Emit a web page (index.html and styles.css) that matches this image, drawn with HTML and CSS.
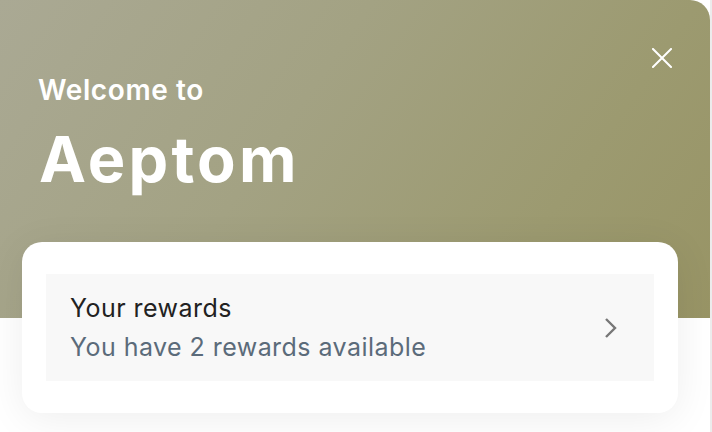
FILE: index.html
```html
<!DOCTYPE html>
<html>
<head>
<meta charset="utf-8">
<link rel="stylesheet" href="styles.css">
</head>
<body>
<div class="m-page">
    <div class="m-hero">
        <div class="m-hero__text">
            <div class="m-hero__sub">Welcome to</div>
            <div class="m-hero__title">Aeptom</div>
        </div>
        <a class="m-hero__close" href="#" aria-label="Close">
            <svg width="20" height="20" viewBox="0 0 20 20"><path d="M1 1L19 19M19 1L1 19" stroke="#fff" stroke-width="2" stroke-linecap="square"/></svg>
        </a>
    </div>
    <div class="m-card">
        <a class="m-rewards" href="#">
            <div class="m-rewards__text">
                <div class="m-rewards__title">Your rewards</div>
                <div class="m-rewards__desc">You have 2 rewards available</div>
            </div>
            <svg class="m-rewards__arrow" width="16" height="22" viewBox="0 0 16 22"><path d="M3 2L12 11L3 20" fill="none" stroke="#777" stroke-width="2.4"/></svg>
        </a>
    </div>
</div>
</body>
</html>
```

FILE: styles.css
```css
html, body {margin: 0; padding: 0;}
body {font-family: Inter, "Noto Sans", sans-serif; background: #fff; width: 712px; height: 432px; overflow: hidden;}
.m-page {width: 710px; height: 432px; border-right: 2px solid #ececec;}
.m-hero {display: flex; justify-content: space-between; align-items: flex-start; height: 318px; box-sizing: border-box; padding: 48px 38px 0 38px; border-top-right-radius: 20px; background: linear-gradient(125deg, #aaa994 0%, #a3a283 40%, #9c9a70 75%, #989465 100%); color: #fff;}
.m-hero__text {padding-top: 25px;}
.m-hero__sub {font-size: 28px; font-weight: 600; line-height: 34px; letter-spacing: 0.6px;}
.m-hero__title {font-size: 63px; font-weight: 700; line-height: 80px; margin-top: 12px; margin-left: 1px; letter-spacing: 3.2px;}
.m-hero__close {display: block; width: 20px; height: 20px; line-height: 0;}
.m-card {margin: -76px 32px 0 22px; padding: 32px 24px; background: #fff; border-radius: 20px; box-shadow: 0 6px 40px rgba(0,0,0,0.07);}
.m-rewards {display: flex; align-items: center; justify-content: space-between; height: 107px; box-sizing: border-box; padding: 0 35px 0 24px; background: #f8f8f8; text-decoration: none;}
.m-rewards__title {font-size: 25px; line-height: 32px; letter-spacing: 0.45px; color: #222;}
.m-rewards__desc {font-size: 25px; line-height: 32px; letter-spacing: 0.45px; margin-top: 7px; color: #5b6b7a;}
```
